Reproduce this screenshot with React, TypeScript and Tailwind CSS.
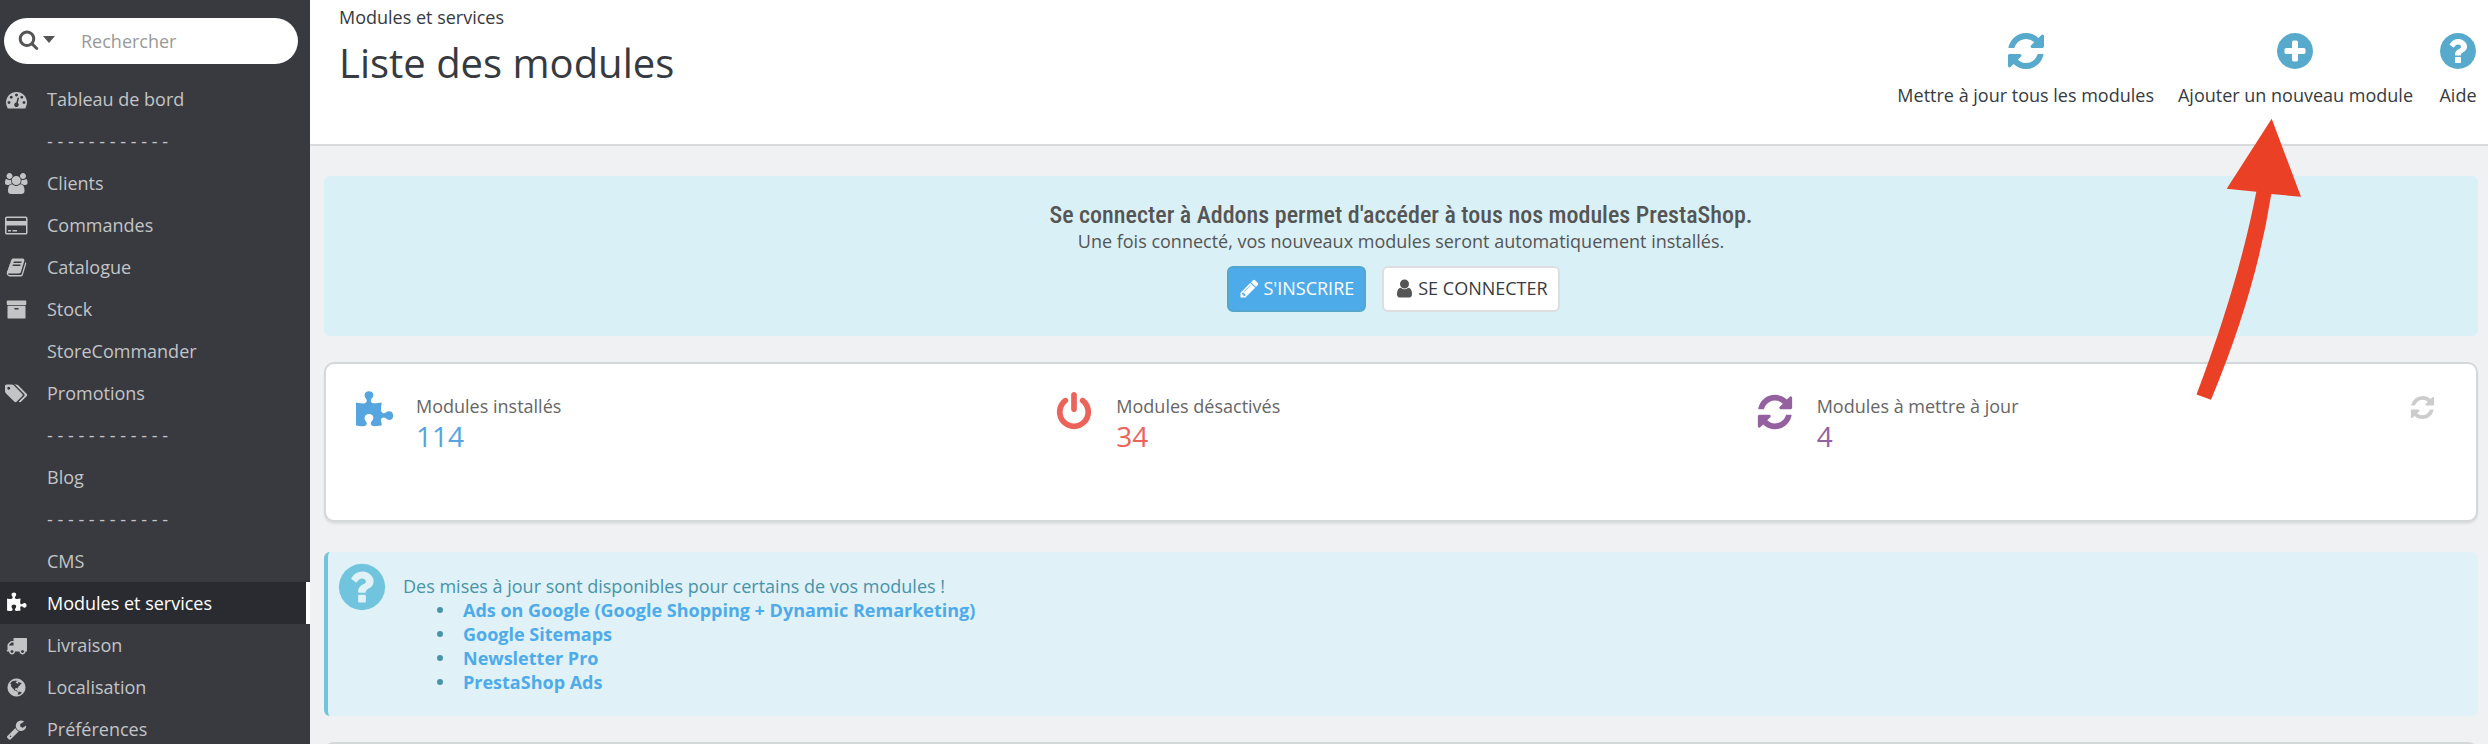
import React from "react";

type Glyph = { w: number; d: string };

const glyphs = {
  search: { w: 1792, d: "M1216 832q0-185-131.5-316.5t-316.5-131.5-316.5 131.5-131.5 316.5 131.5 316.5 316.5 131.5 316.5-131.5 131.5-316.5zm512 832q0 52-38 90t-90 38q-54 0-90-38l-343-342q-179 124-399 124-143 0-273.5-55.5t-225-150-150-225-55.5-273.5 55.5-273.5 150-225 225-150 273.5-55.5 273.5 55.5 225 150 150 225 55.5 273.5q0 220-124 399l343 343q37 37 37 90z" },
  refresh: { w: 1792, d: "M1639 1056q0 5-1 7-64 268-268 434.5t-478 166.5q-146 0-282.5-55t-243.5-157l-129 129q-19 19-45 19t-45-19-19-45v-448q0-26 19-45t45-19h448q26 0 45 19t19 45-19 45l-137 137q71 66 161 102t187 36q134 0 250-65t186-179q11-17 53-117 8-23 30-23h192q13 0 22.5 9.5t9.5 22.5zm25-800v448q0 26-19 45t-45 19h-448q-26 0-45-19t-19-45 19-45l138-138q-148-137-349-137-134 0-250 65t-186 179q-11 17-53 117-8 23-30 23h-199q-13 0-22.5-9.5t-9.5-22.5v-7q65-268 270-434.5t480-166.5q146 0 284 55.5t245 156.5l130-129q19-19 45-19t45 19 19 45z" },
  plus: { w: 1792, d: "M1344 960v-128q0-26-19-45t-45-19h-256v-256q0-26-19-45t-45-19h-128q-26 0-45 19t-19 45v256h-256q-26 0-45 19t-19 45v128q0 26 19 45t45 19h256v256q0 26 19 45t45 19h128q26 0 45-19t19-45v-256h256q26 0 45-19t19-45zm320-64q0 209-103 385.5t-279.5 279.5-385.5 103-385.5-103-279.5-279.5-103-385.5 103-385.5 279.5-279.5 385.5-103 385.5 103 279.5 279.5 103 385.5z" },
  question: { w: 1792, d: "M1024 1376v-192q0-14-9-23t-23-9h-192q-14 0-23 9t-9 23v192q0 14 9 23t23 9h192q14 0 23-9t9-23zm256-672q0-88-55.5-163t-138.5-116-170-41q-243 0-371 213-15 24 8 42l132 100q7 6 19 6 16 0 25-12 53-68 86-92 34-24 86-24 48 0 85.5 26t37.5 59q0 38-20 61t-68 45q-63 28-115.5 86.5t-52.5 125.5v36q0 14 9 23t23 9h192q14 0 23-9t9-23q0-19 21.5-49.5t54.5-49.5q32-18 49-28.5t46-35 44.5-48 28-60.5 12.5-81zm384 192q0 209-103 385.5t-279.5 279.5-385.5 103-385.5-103-279.5-279.5-103-385.5 103-385.5 279.5-279.5 385.5-103 385.5 103 279.5 279.5 103 385.5z" },
  power: { w: 1792, d: "M1664 896q0 156-61 298t-164 245-245 164-298 61-298-61-245-164-164-245-61-298q0-182 80.5-343t226.5-270q43-32 95.5-25t83.5 50q32 42 24.5 94.5t-49.5 84.5q-98 74-151.5 181t-53.5 228q0 104 40.5 198.5t109.5 163.5 163.5 109.5 198.5 40.5 198.5-40.5 163.5-109.5 109.5-163.5 40.5-198.5q0-121-53.5-228t-151.5-181q-42-32-49.5-84.5t24.5-94.5q31-43 84-50t95 25q146 109 226.5 270t80.5 343zm-640-768v640q0 52-38 90t-90 38-90-38-38-90v-640q0-52 38-90t90-38 90 38 38 90z" },
  puzzle: { w: 1792, d: "M1755 1061q0 81-44.5 135t-123.5 54q-41 0-77.5-17.5t-59-38-56.5-38-71-17.5q-110 0-110 124 0 39 16 115t15 115v5q-22 0-33 1-34 3-97.5 11.5t-115.5 13.5-98 5q-61 0-103-26.5t-42-83.5q0-37 17.5-71t38-56.5 38-59 17.5-77.5q0-79-54-123.5t-135-44.5q-84 0-143 45.5t-59 127.5q0 43 15 83t33.5 64.5 33.5 53 15 50.5q0 45-46 89-37 35-117 35-95 0-245-24-9-2-27.5-4t-27.5-4l-13-2q-1 0-3-1-2 0-2-1v-1024q2 1 17.5 3.5t34 5 21.5 3.5q150 24 245 24 80 0 117-35 46-44 46-89 0-22-15-50.5t-33.5-53-33.5-64.5-15-83q0-82 59-127.5t144-45.5q80 0 134 44.5t54 123.5q0 41-17.5 77.5t-38 59-38 56.5-17.5 71q0 57 42 83.5t103 26.5q64 0 180-15t163-17v2q-1 2-3.5 17.5t-5 34-3.5 21.5q-24 150-24 245 0 80 35 117 44 46 89 46 22 0 50.5-15t53-33.5 64.5-33.5 83-15q82 0 127.5 59t45.5 143z" },
  gauge: { w: 1792, d: "M384 1152q0-53-37.5-90.5t-90.5-37.5-90.5 37.5-37.5 90.5 37.5 90.5 90.5 37.5 90.5-37.5 37.5-90.5zm192-448q0-53-37.5-90.5t-90.5-37.5-90.5 37.5-37.5 90.5 37.5 90.5 90.5 37.5 90.5-37.5 37.5-90.5zm428 481l101-382q6-26-7.5-48.5t-38.5-29.5-48 6.5-30 39.5l-101 382q-60 5-107 43.5t-63 98.5q-20 77 20 146t117 89 146-20 89-117q16-60-6-117t-72-91zm660-33q0-53-37.5-90.5t-90.5-37.5-90.5 37.5-37.5 90.5 37.5 90.5 90.5 37.5 90.5-37.5 37.5-90.5zm-640-640q0-53-37.5-90.5t-90.5-37.5-90.5 37.5-37.5 90.5 37.5 90.5 90.5 37.5 90.5-37.5 37.5-90.5zm448 192q0-53-37.5-90.5t-90.5-37.5-90.5 37.5-37.5 90.5 37.5 90.5 90.5 37.5 90.5-37.5 37.5-90.5zm320 448q0 261-141 483-19 29-54 29h-1402q-35 0-54-29-141-221-141-483 0-182 71-348t191-286 286-191 348-71 348 71 286 191 191 286 71 348z" },
  users: { w: 1920, d: "M593 896q-162 5-265 128h-134q-82 0-138-40.5t-56-118.5q0-353 124-353 6 0 43.5 21t97.5 42.5 119 21.5q67 0 133-23-5 37-5 66 0 139 81 256zm1071 637q0 120-73 189.5t-194 69.5h-874q-121 0-194-69.5t-73-189.5q0-53 3.5-103.5t14-109 26.5-108.5 43-97.5 62-81 85.5-53.5 111.5-20q10 0 43 21.5t73 48 107 48 135 21.5 135-21.5 107-48 73-48 43-21.5q61 0 111.5 20t85.5 53.5 62 81 43 97.5 26.5 108.5 14 109 3.5 103.5zm-1024-1277q0 106-75 181t-181 75-181-75-75-181 75-181 181-75 181 75 75 181zm704 384q0 159-112.5 271.5t-271.5 112.5-271.5-112.5-112.5-271.5 112.5-271.5 271.5-112.5 271.5 112.5 112.5 271.5zm576 225q0 78-56 118.5t-138 40.5h-134q-103-123-265-128 81-117 81-256 0-29-5-66 66 23 133 23 59 0 119-21.5t97.5-42.5 43.5-21q124 0 124 353zm-128-609q0 106-75 181t-181 75-181-75-75-181 75-181 181-75 181 75 75 181z" },
  card: { w: 1920, d: "M1760 128q66 0 113 47t47 113v1216q0 66-47 113t-113 47h-1600q-66 0-113-47t-47-113v-1216q0-66 47-113t113-47h1600zm-1600 128q-13 0-22.5 9.5t-9.5 22.5v224h1664v-224q0-13-9.5-22.5t-22.5-9.5h-1600zm1600 1280q13 0 22.5-9.5t9.5-22.5v-608h-1664v608q0 13 9.5 22.5t22.5 9.5h1600zm-1504-128v-128h256v128h-256zm384 0v-128h384v128h-384z" },
  book: { w: 1792, d: "M1703 478q40 57 18 129l-275 906q-19 64-76.5 107.5t-122.5 43.5h-923q-77 0-148.5-53.5t-99.5-131.5q-24-67-2-127 0-4 3-27t4-37q1-8-3-21.5t-3-19.5q2-11 8-21t16.5-23.5 16.5-23.5q23-38 45-91.5t30-91.5q3-10 .5-30t-.5-28q3-11 17-28t17-23q21-36 42-92t25-90q1-9-2.5-32t.5-28q4-13 22-30.5t22-22.5q19-26 42.5-84.5t27.5-96.5q1-8-3-25.5t-2-26.5q2-8 9-18t18-23 17-21q8-12 16.5-30.5t15-35 16-36 19.5-32 26.5-23.5 36-11.5 47.5 5.5l-1 3q38-9 51-9h761q74 0 114 56t18 130l-274 906q-36 119-71.5 153.5t-128.5 34.5h-869q-27 0-38 15-11 16-1 43 24 70 144 70h923q29 0 56-15.5t35-41.5l300-987q7-22 5-57 38 15 59 43zm-1064 2q-4 13 2 22.5t20 9.5h608q13 0 25.5-9.5t16.5-22.5l21-64q4-13-2-22.5t-20-9.5h-608q-13 0-25.5 9.5t-16.5 22.5zm-83 256q-4 13 2 22.5t20 9.5h608q13 0 25.5-9.5t16.5-22.5l21-64q4-13-2-22.5t-20-9.5h-608q-13 0-25.5 9.5t-16.5 22.5z" },
  archive: { w: 1792, d: "M1088 832q0-26-19-45t-45-19h-256q-26 0-45 19t-19 45 19 45 45 19h256q26 0 45-19t19-45zm576-192v960q0 26-19 45t-45 19h-1408q-26 0-45-19t-19-45v-960q0-26 19-45t45-19h1408q26 0 45 19t19 45zm64-448v256q0 26-19 45t-45 19h-1536q-26 0-45-19t-19-45v-256q0-26 19-45t45-19h1536q26 0 45 19t19 45z" },
  tags: { w: 1920, d: "M448 448q0-53-37.5-90.5t-90.5-37.5-90.5 37.5-37.5 90.5 37.5 90.5 90.5 37.5 90.5-37.5 37.5-90.5zm1067 576q0 53-37 90l-491 492q-39 37-91 37-53 0-90-37l-715-716q-38-37-64.5-101t-26.5-117v-416q0-52 38-90t90-38h416q53 0 117 26.5t102 64.5l715 714q37 39 37 91zm384 0q0 53-37 90l-491 492q-39 37-91 37-36 0-59-14t-53-45l470-470q37-37 37-90 0-52-37-91l-715-714q-38-38-102-64.5t-117-26.5h224q53 0 117 26.5t102 64.5l715 714q37 39 37 91z" },
  truck: { w: 1792, d: "M640 1408q0-52-38-90t-90-38-90 38-38 90 38 90 90 38 90-38 38-90zm-384-512h384v-256h-158q-13 0-22 9l-195 195q-9 9-9 22v30zm1280 512q0-52-38-90t-90-38-90 38-38 90 38 90 90 38 90-38 38-90zm256-1088v1024q0 15-4 26.5t-13.5 18.5-16.5 11.5-23.5 6-22.5 2-25.5 0-22.5-.5q0 106-75 181t-181 75-181-75-75-181h-384q0 106-75 181t-181 75-181-75-75-181h-64q-3 0-22.5.5t-25.5 0-22.5-2-23.5-6-16.5-11.5-13.5-18.5-4-26.5q0-26 19-45t45-19v-320q0-8-.5-35t0-38 2.5-34.5 6.5-37 14-30.5 22.5-30l198-198q19-19 50.5-32t58.5-13h160v-192q0-26 19-45t45-19h1024q26 0 45 19t19 45z" },
  globe: { w: 1792, d: "M896 128q209 0 385.5 103t279.5 279.5 103 385.5-103 385.5-279.5 279.5-385.5 103-385.5-103-279.5-279.5-103-385.5 103-385.5 279.5-279.5 385.5-103zm274 521q-2 1-9.5 9.5t-13.5 9.5q2 0 4.5-5t5-11 3.5-7q6-7 22-15 14-6 52-12 34-8 51 11-2-2 9.5-13t14.5-12q3-2 15-4.5t15-7.5l2-22q-12 1-17.5-7t-6.5-21q0 2-6 8 0-7-4.5-8t-11.5 1-9 1q-10-3-15-7.5t-8-16.5-4-15q-2-5-9.5-11t-9.5-10q-1-2-2.5-5.5t-3-6.5-4-5.5-5.5-2.5-7 5-7.5 10-4.5 5q-3-2-6-1.5t-4.5 1-4.5 3-5 3.5q-3 2-8.5 3t-8.5 2q15-5-1-11-10-4-16-3 9-4 7.5-12t-8.5-14h5q-1-4-8.5-8.5t-17.5-8.5-13-6q-8-5-34-9.5t-33-.5q-5 6-4.5 10.5t4 14 3.5 12.5q1 6-5.5 13t-6.5 12q0 7 14 15.5t10 21.5q-3 8-16 16t-16 12q-5 8-1.5 18.5t10.5 16.5q2 2 1.5 4t-3.5 4.5-5.5 4-6.5 3.5l-3 2q-11 5-20.5-6t-13.5-26q-7-25-16-30-23-8-29 1-5-13-41-26-25-9-58-4 6-1 0-15-7-15-19-12 3-6 4-17.5t1-13.5q3-13 12-23 1-1 7-8.5t9.5-13.5.5-6q35 4 50-11 5-5 11.5-17t10.5-17q9-6 14-5.5t14.5 5.5 14.5 5q14 1 15.5-11t-7.5-20q12 1 3-17-4-7-8-9-12-4-27 5-8 4 2 8-1-1-9.5 10.5t-16.5 17.5-16-5q-1-1-5.5-13.5t-9.5-13.5q-8 0-16 15 3-8-11-15t-24-8q19-12-8-27-7-4-20.5-5t-19.5 4q-5 7-5.5 11.5t5 8 10.5 5.5 11.5 4 8.5 3q14 10 8 14-2 1-8.5 3.5t-11.5 4.5-6 4q-3 4 0 14t-2 14q-5-5-9-17.5t-7-16.5q7 9-25 6l-10-1q-4 0-16 2t-20.5 1-13.5-8q-4-8 0-20 1-4 4-2-4-3-11-9.5t-10-8.5q-46 15-94 41 6 1 12-1 5-2 13-6.5t10-5.5q34-14 42-7l5-5q14 16 20 25-7-4-30-1-20 6-22 12 7 12 5 18-4-3-11.5-10t-14.5-11-15-5q-16 0-22 1-146 80-235 222 7 7 12 8 4 1 5 9t2.5 11 11.5-3q9 8 3 19 1-1 44 27 19 17 21 21 3 11-10 18-1-2-9-9t-9-4q-3 5 .5 18.5t10.5 12.5q-7 0-9.5 16t-2.5 35.5-1 23.5l2 1q-3 12 5.5 34.5t21.5 19.5q-13 3 20 43 6 8 8 9 3 2 12 7.5t15 10 10 10.5q4 5 10 22.5t14 23.5q-2 6 9.5 20t10.5 23q-1 0-2.5 1t-2.5 1q3 7 15.5 14t15.5 13q1 3 2 10t3 11 8 2q2-20-24-62-15-25-17-29-3-5-5.5-15.5t-4.5-14.5q2 0 6 1.5t8.5 3.5 7.5 4 2 3q-3 7 2 17.5t12 18.5 17 19 12 13q6 6 14 19.5t0 13.5q9 0 20 10.5t17 19.5q5 8 8 26t5 24q2 7 8.5 13.5t12.5 9.5l16 8 13 7q5 2 18.5 10.5t21.5 11.5q10 4 16 4t14.5-2.5 13.5-3.5q15-2 29 15t21 21q36 19 55 11-2 1 .5 7.5t8 15.5 9 14.5 5.5 8.5q5 6 18 15t18 15q6-4 7-9-3 8 7 20t18 10q14-3 14-32-31 15-49-18 0-1-2.5-5.5t-4-8.5-2.5-8.5 0-7.5 5-3q9 0 10-3.5t-2-12.5-4-13q-1-8-11-20t-12-15q-5 9-16 8t-16-9q0 1-1.5 5.5t-1.5 6.5q-13 0-15-1 1-3 2.5-17.5t3.5-22.5q1-4 5.5-12t7.5-14.5 4-12.5-4.5-9.5-17.5-2.5q-19 1-26 20-1 3-3 10.5t-5 11.5-9 7q-7 3-24 2t-24-5q-13-8-22.5-29t-9.5-37q0-10 2.5-26.5t3-25-5.5-24.5q3-2 9-9.5t10-10.5q2-1 4.5-1.5t4.5 0 4-1.5 3-6q-1-1-4-3-3-3-4-3 7 3 28.5-1.5t27.5 1.5q15 11 22-2 0-1-2.5-9.5t-.5-13.5q5 27 29 9 3 3 15.5 5t17.5 5q3 2 7 5.5t5.5 4.5 5-.5 8.5-6.5q10 14 12 24 11 40 19 44 7 3 11 2t4.5-9.5 0-14-1.5-12.5l-1-8v-18l-1-8q-15-3-18.5-12t1.5-18.5 15-18.5q1-1 8-3.5t15.5-6.5 12.5-8q21-19 15-35 7 0 11-9-1 0-5-3t-7.5-5-4.5-2q9-5 2-16 5-3 7.5-11t7.5-10q9 12 21 2 7-8 1-16 5-7 20.5-10.5t18.5-9.5q7 2 8-2t1-12 3-12q4-5 15-9t13-5l17-11q3-4 0-4 18 2 31-11 10-11-6-20 3-6-3-9.5t-15-5.5q3-1 11.5-.5t10.5-1.5q15-10-7-16-17-5-43 12zm-163 877q206-36 351-189-3-3-12.5-4.5t-12.5-3.5q-18-7-24-8 1-7-2.5-13t-8-9-12.5-8-11-7q-2-2-7-6t-7-5.5-7.5-4.5-8.5-2-10 1l-3 1q-3 1-5.5 2.5t-5.5 3-4 3 0 2.5q-21-17-36-22-5-1-11-5.5t-10.5-7-10-1.5-11.5 7q-5 5-6 15t-2 13q-7-5 0-17.5t2-18.5q-3-6-10.5-4.5t-12 4.5-11.5 8.5-9 6.5-8.5 5.5-8.5 7.5q-3 4-6 12t-5 11q-2-4-11.5-6.5t-9.5-5.5q2 10 4 35t5 38q7 31-12 48-27 25-29 40-4 22 12 26 0 7-8 20.5t-7 21.5q0 6 2 16z" },
  wrench: { w: 1792, d: "M448 1472q0-26-19-45t-45-19-45 19-19 45 19 45 45 19 45-19 19-45zm644-420l-682 682q-37 37-90 37-52 0-91-37l-106-108q-38-36-38-90 0-53 38-91l681-681q39 98 114.5 173.5t173.5 114.5zm634-435q0 39-23 106-47 134-164.5 217.5t-258.5 83.5q-185 0-316.5-131.5t-131.5-316.5 131.5-316.5 316.5-131.5q58 0 121.5 16.5t107.5 46.5q16 11 16 28t-16 28l-293 169v224l193 107q5-3 79-48.5t135.5-81 70.5-35.5q15 0 23.5 10t8.5 25z" },
  pencil: { w: 1792, d: "M491 1536l91-91-235-235-91 91v107h128v128h107zm523-928q0-22-22-22-10 0-17 7l-542 542q-7 7-7 17 0 22 22 22 10 0 17-7l542-542q7-7 7-17zm-54-192l416 416-832 832h-416v-416zm683 96q0 53-37 90l-166 166-416-416 166-165q36-38 90-38 53 0 91 38l235 234q37 39 37 91z" },
  user: { w: 1792, d: "M1536 1399q0 109-62.5 187t-150.5 78h-854q-88 0-150.5-78t-62.5-187q0-85 8.5-160.5t31.5-152 58.5-131 94-89 134.5-34.5q131 128 313 128t313-128q76 0 134.5 34.5t94 89 58.5 131 31.5 152 8.5 160.5zm-256-887q0 159-112.5 271.5t-271.5 112.5-271.5-112.5-112.5-271.5 112.5-271.5 271.5-112.5 271.5 112.5 112.5 271.5z" },
} satisfies Record<string, Glyph>;

type IconName = keyof typeof glyphs;

function Icon({ name, className }: { name: IconName; className: string }) {
  const g = glyphs[name];
  return (
    <svg viewBox={`0 0 ${g.w} 1792`} className={`shrink-0 overflow-visible fill-current ${className}`} aria-hidden="true">
      <path d={g.d} />
    </svg>
  );
}

const separator = "- - - - - - - - - - - -";

const menu: { label: string; icon?: IconName; active?: boolean }[] = [
  { label: "Tableau de bord", icon: "gauge" },
  { label: separator },
  { label: "Clients", icon: "users" },
  { label: "Commandes", icon: "card" },
  { label: "Catalogue", icon: "book" },
  { label: "Stock", icon: "archive" },
  { label: "StoreCommander" },
  { label: "Promotions", icon: "tags" },
  { label: separator },
  { label: "Blog" },
  { label: separator },
  { label: "CMS" },
  { label: "Modules et services", icon: "puzzle", active: true },
  { label: "Livraison", icon: "truck" },
  { label: "Localisation", icon: "globe" },
  { label: "Préférences", icon: "wrench" },
];

const actions: { label: string; icon: IconName }[] = [
  { label: "Mettre à jour tous les modules", icon: "refresh" },
  { label: "Ajouter un nouveau module", icon: "plus" },
  { label: "Aide", icon: "question" },
];

const stats: { label: string; value: string; icon: IconName; color: string }[] = [
  { label: "Modules installés", value: "114", icon: "puzzle", color: "text-[#55a5de]" },
  { label: "Modules désactivés", value: "34", icon: "power", color: "text-[#ec6459]" },
  { label: "Modules à mettre à jour", value: "4", icon: "refresh", color: "text-[#9560a0]" },
];

const updates = [
  "Ads on Google (Google Shopping + Dynamic Remarketing)",
  "Google Sitemaps",
  "Newsletter Pro",
  "PrestaShop Ads",
];

function Sidebar() {
  return (
    <aside className="w-[310px] shrink-0 bg-[#383a40] text-[#c3c4c6]">
      <div className="pt-[18px] pr-3 pb-[14px] pl-1">
        <div className="flex h-[46px] items-center rounded-full bg-white pl-[14px] text-[#555]">
          <button type="button" aria-label="Type de recherche" className="flex items-center gap-1 pb-1">
            <Icon name="search" className="h-[21px] w-[21px]" />
            <svg viewBox="0 0 12 7" className="h-[7px] w-3 fill-current" aria-hidden="true">
              <path d="M0 0h12l-6 7z" />
            </svg>
          </button>
          <input
            type="text"
            aria-label="Rechercher"
            placeholder="Rechercher"
            className="ml-[26px] w-full min-w-0 bg-transparent outline-none placeholder:text-[#999]"
          />
        </div>
      </div>
      <nav>
        <ul>
          {menu.map((item, i) => (
            <li key={i}>
              <a
                href="#"
                className={
                  item.active
                    ? "flex h-[42px] items-center gap-5 border-r-4 border-white bg-[#2a2b30] text-white"
                    : "flex h-[42px] items-center gap-5"
                }
              >
                <span className="flex w-[27px] justify-end">
                  {item.icon && <Icon name={item.icon} className="h-[21px]" />}
                </span>
                {item.label}
              </a>
            </li>
          ))}
        </ul>
      </nav>
    </aside>
  );
}

function PageHeader() {
  return (
    <header className="flex h-[146px] justify-between border-b-2 border-[#d9dadc] bg-white pr-[9px] pl-[29px]">
      <div className="pt-[5px]">
        <p>Modules et services</p>
        <h1 className="mt-[7px] text-[40px] leading-[54px]">Liste des modules</h1>
      </div>
      <div className="flex items-start gap-6 pt-[30px]">
        {actions.map((a) => (
          <a key={a.label} href="#" className="flex flex-col items-center gap-[11px]">
            <Icon name={a.icon} className="h-[42px] w-[42px] text-[#57aacb]" />
            {a.label}
          </a>
        ))}
      </div>
    </header>
  );
}

function AddonsBanner() {
  return (
    <section className="flex flex-col items-center rounded-md bg-[#d9f0f6] pt-[25px] pb-6 text-[#555]">
      <h2 className="font-['Ubuntu_Condensed','Roboto_Condensed','Liberation_Sans_Narrow','Open_Sans',sans-serif] text-[24px] leading-7 font-medium">
        Se connecter à Addons permet d'accéder à tous nos modules PrestaShop.
      </h2>
      <p>Une fois connecté, vos nouveaux modules seront automatiquement installés.</p>
      <div className="mt-[13px] flex gap-4 pr-[15px]">
        <button type="button" className="flex h-[46px] items-center gap-[3px] rounded-md border-2 border-[#54a7cc] bg-[#4dabea] px-[10px] pb-0.5 text-white">
          <Icon name="pencil" className="h-[21px] w-[21px]" />
          S'INSCRIRE
        </button>
        <button type="button" className="flex h-[46px] items-center gap-[3px] rounded-md border-2 border-[#dddee0] bg-white px-[10px] pb-0.5 text-[#363a41]">
          <Icon name="user" className="h-[21px] w-[21px] text-[#555]" />
          SE CONNECTER
        </button>
      </div>
    </section>
  );
}

function StatsPanel() {
  return (
    <section className="mt-[26px] grid h-[160px] grid-cols-3 rounded-[10px] border-2 border-[#d3d8db] bg-white pt-7 pr-[21px] pl-7 shadow-[0_2px_2px_rgba(0,0,0,0.08)]">
      {stats.map((s) => (
        <div key={s.label} className="flex items-start">
          <Icon name={s.icon} className={`h-10 w-10 ${s.color}`} />
          <div className="ml-[22px] pt-0.5 text-[#666]">
            <p>{s.label}</p>
            <p className={`text-[28px] leading-9 ${s.color}`}>{s.value}</p>
          </div>
          {s.icon === "refresh" && (
            <button type="button" aria-label="Actualiser" className="mt-0.5 mr-[19px] ml-auto text-[#ccc]">
              <Icon name="refresh" className="h-[27px] w-[27px]" />
            </button>
          )}
        </div>
      ))}
    </section>
  );
}

function UpdatesAlert() {
  return (
    <section className="mt-[30px] flex items-start rounded-md border-l-4 border-[#70c4dd] bg-[#e0f1f8] py-[22px] pl-[7px] text-[#4793a9]">
      <Icon name="question" className="-mt-[14px] h-[54px] w-[54px] text-[#70c4dd]" />
      <div className="ml-[14px]">
        <p>Des mises à jour sont disponibles pour certains de vos modules !</p>
        <ul className="pl-[34px]">
          {updates.map((u) => (
            <li key={u} className="flex items-center gap-5 before:size-1.5 before:rounded-full before:bg-current before:content-['']">
              <a href="#" className="font-bold text-[#4dabea]">{u}</a>
            </li>
          ))}
        </ul>
      </div>
    </section>
  );
}

function PointerArrow() {
  return (
    <svg viewBox="2190 110 120 300" className="pointer-events-none absolute top-[110px] right-[178px] h-[300px] w-[120px] fill-[#ea4126]" aria-hidden="true">
      <path d="M2271.7 118.7 2301 196.8 2271.3 194Q2256 292 2211 399.7L2196.5 394.5Q2239 282 2256.3 191.8L2226.7 188.7Z" />
    </svg>
  );
}

export default function App() {
  return (
    <div className="relative flex h-screen overflow-hidden bg-[#eff1f3] font-['Open_Sans','Noto_Sans',sans-serif] text-[18px] leading-6 text-[#363a41]">
      <Sidebar />
      <main className="min-w-0 flex-1">
        <PageHeader />
        <div className="pt-[30px] pr-[10px] pl-[14px]">
          <AddonsBanner />
          <StatsPanel />
          <UpdatesAlert />
          <section className="mt-[26px] h-20 rounded-[10px] border-2 border-[#d3d8db] bg-white" />
        </div>
      </main>
      <PointerArrow />
    </div>
  );
}
